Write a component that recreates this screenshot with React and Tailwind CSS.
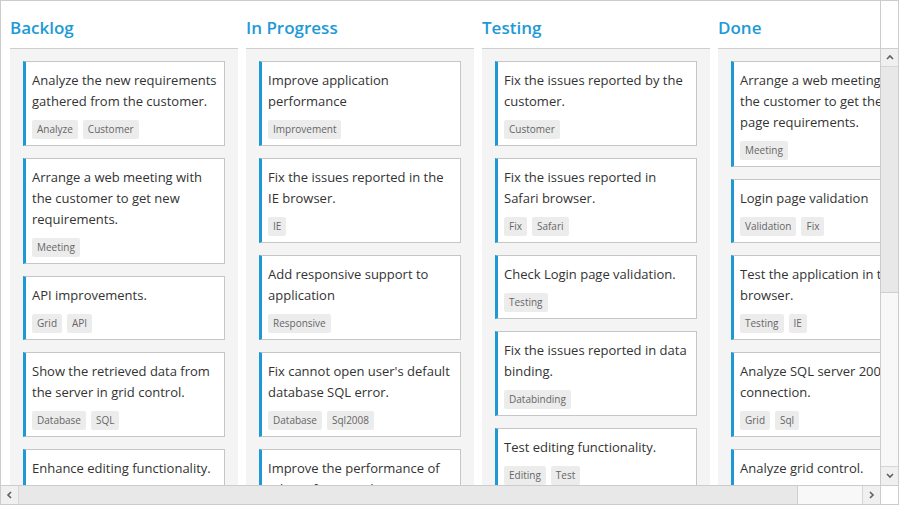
import React from 'react';

// Tablero kanban con sus columnas
const columns = [
  {
    title: 'Backlog',
    cards: [
      { text: 'Analyze the new requirements\ngathered from the customer.', tags: ['Analyze', 'Customer'] },
      { text: 'Arrange a web meeting with\nthe customer to get new\nrequirements.', tags: ['Meeting'] },
      { text: 'API improvements.', tags: ['Grid', 'API'] },
      { text: 'Show the retrieved data from\nthe server in grid control.', tags: ['Database', 'SQL'] },
      { text: 'Enhance editing functionality.', tags: ['Editing'] },
    ],
  },
  {
    title: 'In Progress',
    cards: [
      { text: 'Improve application\nperformance', tags: ['Improvement'] },
      { text: 'Fix the issues reported in the\nIE browser.', tags: ['IE'] },
      { text: 'Add responsive support to\napplication', tags: ['Responsive'] },
      { text: "Fix cannot open user's default\ndatabase SQL error.", tags: ['Database', 'Sql2008'] },
      { text: 'Improve the performance of\nediting functionality.', tags: ['Editing'] },
    ],
  },
  {
    title: 'Testing',
    cards: [
      { text: 'Fix the issues reported by the\ncustomer.', tags: ['Customer'] },
      { text: 'Fix the issues reported in\nSafari browser.', tags: ['Fix', 'Safari'] },
      { text: 'Check Login page validation.', tags: ['Testing'] },
      { text: 'Fix the issues reported in data\nbinding.', tags: ['Databinding'] },
      { text: 'Test editing functionality.', tags: ['Editing', 'Test'] },
    ],
  },
  {
    title: 'Done',
    cards: [
      { text: 'Arrange a web meeting with\nthe customer to get the login\npage requirements.', tags: ['Meeting'] },
      { text: 'Login page validation', tags: ['Validation', 'Fix'] },
      { text: 'Test the application in the IE\nbrowser.', tags: ['Testing', 'IE'] },
      { text: 'Analyze SQL server 2008\nconnection.', tags: ['Grid', 'Sql'] },
      { text: 'Analyze grid control.', tags: ['Grid'] },
    ],
  },
];

const Chevron = ({ dir }) => {
  const paths = {
    up: 'M1 5 L4 2 L7 5',
    down: 'M1 2 L4 5 L7 2',
    left: 'M5 1 L2 4 L5 7',
    right: 'M2 1 L5 4 L2 7',
  };
  return (
    <svg width="8" height="8" viewBox="0 0 8 8">
      <path d={paths[dir]} fill="none" stroke="#606060" strokeWidth="1.6" />
    </svg>
  );
};

const Card = ({ card }) => (
  <div className="shrink-0 bg-white border border-[#c6c6c6] border-l-[3px] border-l-[#1d9ad6] pl-[6px] pr-[4px] pt-[8px] pb-[6px]">
    <p className="whitespace-pre-line text-[13px] leading-[21px] text-[#333]">{card.text}</p>
    <div className="mt-[8px] flex gap-[5px]">
      {card.tags.map((t) => (
        <span key={t} className="h-[19px] px-[5px] rounded-[2px] bg-[#ececec] text-[10px] leading-[19px] text-[#666]">
          {t}
        </span>
      ))}
    </div>
  </div>
);

const Column = ({ col }) => (
  <div className="w-[228px] shrink-0 flex flex-col">
    <div className="h-[48px] border-b border-[#cfcfcf] pt-[15px] text-[17px] leading-[24px] font-semibold text-[#1d9ad6]">
      {col.title}
    </div>
    <div className="flex-1 bg-[#f4f4f4] px-[13px] pt-[12px] flex flex-col gap-[12px]">
      {col.cards.map((c, i) => (
        <Card key={i} card={c} />
      ))}
    </div>
  </div>
);

export default function App() {
  return (
    <div className="w-[899px] h-[505px] border border-[#cccccc] bg-white flex flex-col overflow-hidden font-['Open_Sans',sans-serif]">
      <div className="flex flex-1 min-h-0">
        <div className="flex-1 min-w-0 overflow-hidden">
          <div className="flex gap-2 pl-[9px]">
            {columns.map((col) => (
              <Column key={col.title} col={col} />
            ))}
          </div>
        </div>
        {/* barra vertical */}
        <div className="w-[18px] shrink-0 border-l border-[#cccccc] flex flex-col">
          <div className="h-[48px] shrink-0 border-b border-[#cfcfcf] bg-white" />
          <div className="h-[18px] shrink-0 bg-[#f0f0f0] border-b border-[#d6d6d6] flex items-center justify-center">
            <Chevron dir="up" />
          </div>
          <div className="h-[226px] shrink-0 bg-[#e8e8e8] border-b border-[#cfcfcf]" />
          <div className="flex-1 bg-[#f8f8f8]" />
          <div className="h-[19px] shrink-0 bg-[#f0f0f0] border-t border-[#d6d6d6] flex items-center justify-center">
            <Chevron dir="down" />
          </div>
        </div>
      </div>
      {/* barra horizontal */}
      <div className="h-[19px] shrink-0 border-t border-[#cccccc] flex">
        <div className="w-[18px] shrink-0 bg-[#f0f0f0] border-r border-[#d6d6d6] flex items-center justify-center">
          <Chevron dir="left" />
        </div>
        <div className="w-[779px] shrink-0 bg-[#e8e8e8] border-r border-[#cfcfcf]" />
        <div className="flex-1 bg-[#f8f8f8]" />
        <div className="w-[18px] shrink-0 bg-[#f0f0f0] border-l border-[#d6d6d6] flex items-center justify-center">
          <Chevron dir="right" />
        </div>
        <div className="w-[18px] shrink-0 border-l border-[#cccccc] bg-white" />
      </div>
    </div>
  );
}
